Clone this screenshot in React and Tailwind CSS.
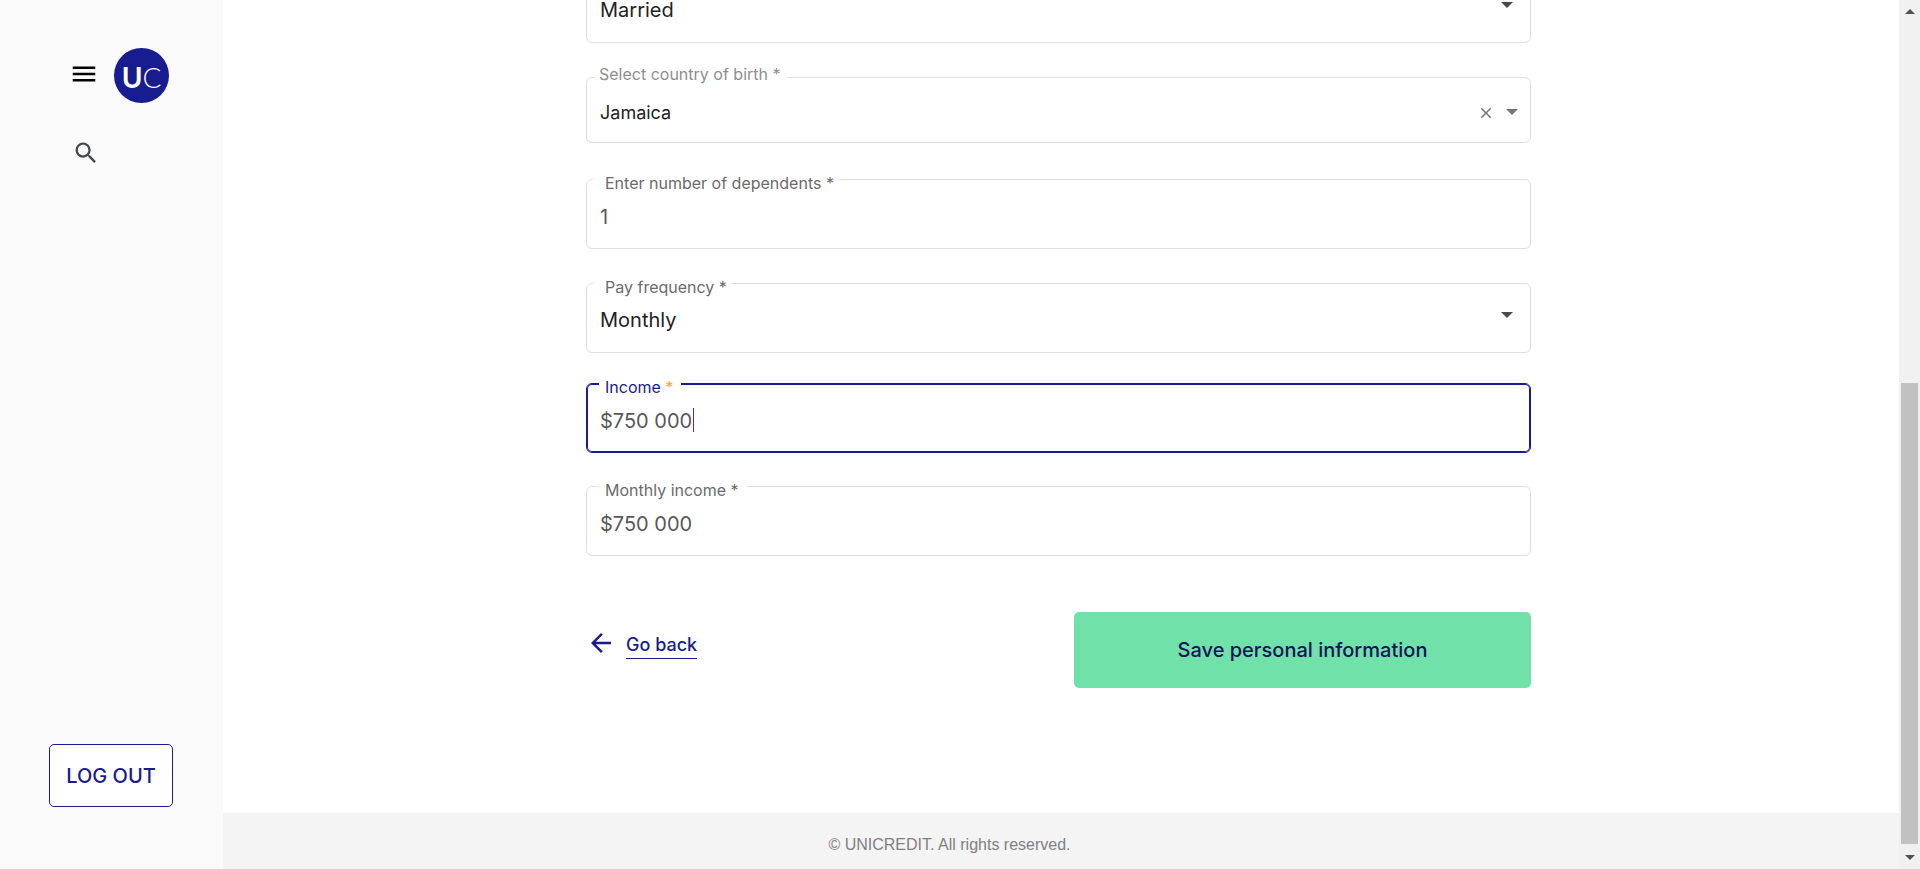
import React from "react";
import { MdArrowBack, MdClose, MdMenu, MdSearch } from "react-icons/md";

function Triangle({ className = "" }) {
  return (
    <svg viewBox="0 0 12 6" className={"h-[6px] w-3 fill-current " + className} aria-hidden="true">
      <path d="M0 0h12L6 6z" />
    </svg>
  );
}

const labelBase = "absolute top-[-8px] bg-white text-[16px] leading-[22px] whitespace-nowrap ";

function Field({ id, label, star = "", labelClass, boxClass = "border-[#dedede]", children }) {
  return (
    <div className={"relative flex h-[70px] items-center rounded-md border px-[13px] pt-1 " + boxClass}>
      {label && (
        <label htmlFor={id} className={labelBase + labelClass}>
          {label} <span className={star}>*</span>
        </label>
      )}
      {children}
    </div>
  );
}

function SelectBox({ id, options, ...rest }) {
  return (
    <>
      <select
        id={id}
        className="h-10 w-full appearance-none bg-transparent text-[20px] text-[#222] outline-none"
        {...rest}
      >
        {options.map((o) => (
          <option key={o}>{o}</option>
        ))}
      </select>
      <Triangle className="pointer-events-none absolute top-7 right-[17px] text-[#454a4f]" />
    </>
  );
}

const inputClass = "h-10 bg-transparent pt-[2px] text-[20px] text-[#585858] outline-none ";

function Sidebar() {
  return (
    <aside className="flex w-[223px] shrink-0 flex-col bg-[#fafafa] pt-12">
      <div className="flex items-center gap-[15px] pl-[69px]">
        <button type="button" aria-label="Menu" className="pb-1 text-black">
          <MdMenu size={30} />
        </button>
        <a
          href="#home"
          className="flex h-[55px] w-[55px] items-center justify-center rounded-full bg-[#171c8f] pt-[2px] font-['Lato',sans-serif] text-[28px] text-white"
        >
          <span className="font-bold">U</span>
          <span className="font-light">C</span>
        </a>
      </div>
      <button type="button" aria-label="Search" className="mt-9 ml-[72px] self-start text-[#454a4f]">
        <MdSearch size={28} />
      </button>
      <button
        type="button"
        className="mt-auto mb-[62px] ml-[49px] h-[63px] w-[124px] rounded-[5px] border border-[#171c8f] bg-white text-[20px] font-medium text-[#171c8f]"
      >
        LOG OUT
      </button>
    </aside>
  );
}

function ProfileForm() {
  return (
    <form className="mr-[5px] w-full max-w-[945px] self-center pb-[125px]" onSubmit={(e) => e.preventDefault()}>
      <Field>
        <SelectBox id="marital" aria-label="Marital status" options={["Married", "Single"]} />
      </Field>

      <div className="relative mt-[34px] flex h-[66px] items-center rounded-md border border-[#dedede] pt-1 pr-3 pl-[13px]">
        <label
          htmlFor="country"
          className="absolute top-[-15px] left-2 bg-white pr-[6px] pl-1 text-[16px] leading-[22px] whitespace-nowrap text-[#8e8e8e]"
        >
          Select country of birth *
        </label>
        <input
          id="country"
          defaultValue="Jamaica"
          className="h-10 min-w-0 grow bg-transparent text-[18px] text-[#222] outline-none"
        />
        <button type="button" aria-label="Clear" className="mr-[11px] pt-[2px] text-[#757575]">
          <MdClose size={18} />
        </button>
        <button type="button" aria-label="Open" className="text-[#757575]">
          <Triangle />
        </button>
      </div>

      <div className="mt-9">
        <Field id="dependents" label="Enter number of dependents" labelClass="left-[6px] pr-1 pl-3 text-[#6b6b6b]">
          <input id="dependents" defaultValue="1" className={inputClass + "w-full"} />
        </Field>
      </div>

      <div className="mt-[34px]">
        <Field id="frequency" label="Pay frequency" labelClass="left-[6px] pr-1 pl-3 text-[#6b6b6b]">
          <SelectBox id="frequency" options={["Monthly", "Weekly"]} />
        </Field>
      </div>

      <div className="mt-[30px]">
        <Field
          id="income"
          label="Income"
          star="text-[#f9a825]"
          labelClass="left-3 pr-2 pl-[6px] text-[#171c8f]"
          boxClass="border-[#171c8f] inset-ring inset-ring-[#171c8f]"
        >
          <input id="income" defaultValue="$750 000" className={inputClass + "field-sizing-content"} />
          <span className="ml-px h-6 w-px bg-[#8c1f6b]" />
        </Field>
      </div>

      <div className="mt-[33px]">
        <Field id="monthly" label="Monthly income" labelClass="left-3 pr-2 pl-[6px] text-[#6b6b6b]">
          <input id="monthly" defaultValue="$750 000" className={inputClass + "w-full"} />
        </Field>
      </div>

      <div className="mt-14 flex items-start justify-between">
        <a href="#back" className="mt-4 flex items-start gap-[10px] text-[#171c8f]">
          <MdArrowBack size={30} />
          <span className="border-b border-current pt-1 text-[18px] leading-[26px] font-medium">Go back</span>
        </a>
        <button
          type="submit"
          className="h-[76px] w-[457px] rounded-[5px] bg-[#70e2a9] text-[20px] font-medium text-[#12125a]"
        >
          Save personal information
        </button>
      </div>
    </form>
  );
}

function ScrollTrack() {
  return (
    <div className="flex w-[21px] shrink-0 flex-col items-center bg-[#f0f0f0] text-[#505050]" aria-hidden="true">
      <div className="flex h-[21px] shrink-0 items-center pt-[2px]">
        <svg viewBox="0 0 10 5" className="h-[5px] w-[10px] fill-current">
          <path d="M0 5h10L5 0z" />
        </svg>
      </div>
      <div className="grow-[362] basis-0" />
      <div className="w-[17px] grow-[461] basis-0 bg-[#c1c1c1]" />
      <div className="flex h-[25px] shrink-0 items-center pt-[2px]">
        <svg viewBox="0 0 10 5" className="h-[5px] w-[10px] fill-current">
          <path d="M0 0h10L5 5z" />
        </svg>
      </div>
    </div>
  );
}

export default function App() {
  return (
    <div className="flex h-screen overflow-hidden bg-white font-['Inter','Liberation_Sans',sans-serif]">
      <Sidebar />
      <div className="flex min-w-0 grow flex-col justify-end">
        <main className="flex shrink-0 flex-col">
          <ProfileForm />
        </main>
        <footer className="flex h-14 shrink-0 items-center justify-center bg-[#f4f4f4] pt-2 pr-[223px] font-['Liberation_Sans',Arial,sans-serif] text-[16px] text-[#808080]">
          © UNICREDIT. All rights reserved.
        </footer>
      </div>
      <ScrollTrack />
    </div>
  );
}
